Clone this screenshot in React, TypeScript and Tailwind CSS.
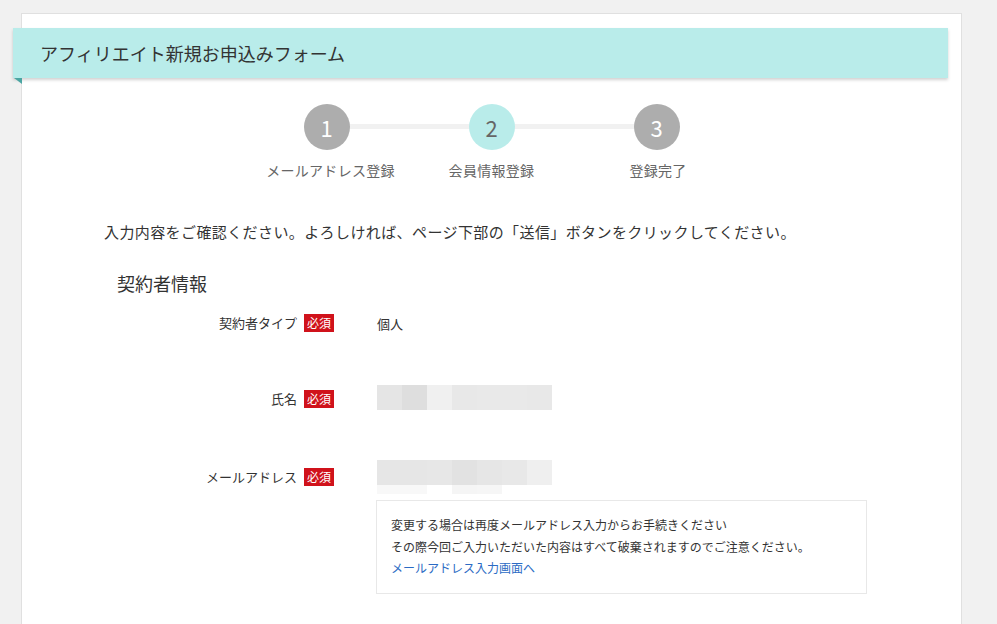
import React from 'react';

const font = { fontFamily: '"Noto Sans CJK JP", "Noto Sans", sans-serif' };

const steps = [
  { n: '1', label: 'メールアドレス登録', active: false },
  { n: '2', label: '会員情報登録', active: true },
  { n: '3', label: '登録完了', active: false },
];

const nameBlocks = ['#e5e5e5', '#dedede', '#f0f0f0', '#e8e8e8', '#e9e9e9', '#e9e9e9', '#e8e8e8'];
const mailBlocks = ['#e6e6e6', '#e6e6e6', '#e7e7e7', '#e2e2e2', '#e6e6e6', '#e8e8e8', '#efefef'];
const mailBlocks2 = ['#f8f8f8', '#f8f8f8', '#ffffff', '#f5f5f5', '#f6f6f6', '#ffffff', '#ffffff'];

function Badge() {
  return (
    <span className="ml-[7px] inline-flex h-[18px] w-[30px] items-center justify-center bg-[#d0121b] text-[12px] leading-none text-white">
      必須
    </span>
  );
}

function Blocks({ colors, h }: { colors: string[]; h: string }) {
  return (
    <div className="flex">
      {colors.map((c, i) => (
        <div key={i} className={`w-[25px] ${h}`} style={{ backgroundColor: c }} />
      ))}
    </div>
  );
}

export default function App() {
  return (
    <div className="min-h-[624px] bg-[#f1f1f1] pt-[13px] pl-[21px]" style={font}>
      <div className="h-[620px] w-[941px] border border-b-0 border-[#e0e0e0] bg-white pt-[14px]">
        {/* header band */}
        <div className="relative ml-[-9px] mr-[13px] flex h-[50px] items-center bg-[#b9ecea] pl-[27px] shadow-[0_2px_3px_rgba(0,0,0,0.18)]">
          <h1 className="text-[18px] font-normal text-[#333]">アフィリエイト新規お申込みフォーム</h1>
          <svg className="absolute left-0 top-full" width="9" height="6" viewBox="0 0 9 6">
            <polygon points="1,0 9,0 9,6" fill="#4aa5a2" />
          </svg>
        </div>

        {/* steps */}
        <div className="relative mt-[26px] flex justify-center">
          <div className="absolute top-[20px] left-1/2 h-[5px] w-[330px] -translate-x-1/2 bg-[#f1f1f1]" />
          {steps.map((s, i) => (
            <div key={s.n} className="relative flex w-[165px] flex-col items-center">
              <div
                className={`flex h-[46px] w-[46px] items-center justify-center rounded-full text-[22px] ${
                  s.active ? 'bg-[#b9ecea] text-[#666]' : 'bg-[#adadad] text-white'
                }`}
              >
                {s.n}
              </div>
              <div
                className={`mt-[10px] text-[14px] leading-[20px] tracking-[0.3px] text-[#666] ${
                  i === 0 ? 'ml-[8px]' : i === 2 ? 'ml-[3px]' : ''
                }`}
              >
                {s.label}
              </div>
            </div>
          ))}
        </div>

        {/* intro */}
        <p className="mt-[41px] pl-[82px] text-[15px] leading-[22px] tracking-[0.4px] text-[#333]">
          入力内容をご確認ください。よろしければ、ページ下部の「送信」ボタンをクリックしてください。
        </p>

        <h2 className="mt-[27px] pl-[95px] text-[18px] font-normal leading-[26px] text-[#333]">契約者情報</h2>

        {/* rows */}
        <div className="mt-[14px] flex h-[26px] items-center">
          <div className="flex w-[312px] items-center justify-end text-[13px] text-[#333]">
            契約者タイプ
            <Badge />
          </div>
          <div className="ml-[43px] pt-[2px] text-[13px] text-[#333]">個人</div>
        </div>

        <div className="mt-[49px] flex items-center">
          <div className="flex w-[312px] items-center justify-end pt-[2px] text-[13px] text-[#333]">
            氏名
            <Badge />
          </div>
          <div className="ml-[43px]">
            <Blocks colors={nameBlocks} h="h-[25px]" />
          </div>
        </div>

        <div className="mt-[50px] flex items-start">
          <div className="flex h-[34px] w-[312px] items-center justify-end text-[13px] text-[#333]">
            メールアドレス
            <Badge />
          </div>
          <div className="ml-[42px]">
            <div className="ml-[1px]">
              <Blocks colors={mailBlocks} h="h-[25px]" />
              <Blocks colors={mailBlocks2} h="h-[9px]" />
            </div>
            <div className="mt-[6px] w-[491px] border border-[#e8e8e8] px-[14px] pt-[13px] pb-[14px] text-[12px] leading-[21.5px] text-[#333]">
              <p>変更する場合は再度メールアドレス入力からお手続きください</p>
              <p>その際今回ご入力いただいた内容はすべて破棄されますのでご注意ください。</p>
              <a className="text-[#2b6bc4]" href="#">
                メールアドレス入力画面へ
              </a>
            </div>
          </div>
        </div>
      </div>
    </div>
  );
}
